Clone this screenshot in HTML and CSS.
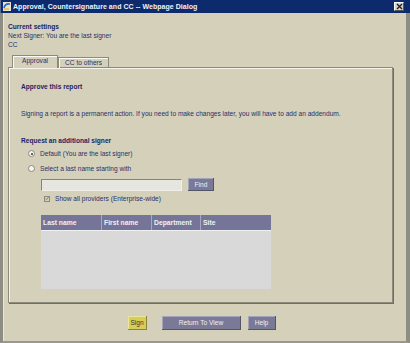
FILE: index.html
```html
<!DOCTYPE html>
<html lang="en">
<head>
  <meta charset="UTF-8">
  <title>Approval, Countersignature and CC -- Webpage Dialog</title>
  <link rel="stylesheet" href="styles.css">
</head>
<body>
  <div class="dialog">
    <div class="titlebar">
      <svg class="titlebar__icon" width="8" height="9" viewBox="0 0 8 9">
        <rect x="0" y="0" width="8" height="9" fill="#e8e4d0"/>
        <path d="M1 6 Q2 1 7 2" stroke="#2a6ad0" stroke-width="1.6" fill="none"/>
        <path d="M1 7 L6 7" stroke="#e0a020" stroke-width="1"/>
      </svg>
      <span class="titlebar__text">Approval, Countersignature and CC -- Webpage Dialog</span>
      <span class="titlebar__close">
        <svg width="7" height="7" viewBox="0 0 7 7"><path d="M1 1 L6 6 M6 1 L1 6" stroke="#222" stroke-width="1.4"/></svg>
      </span>
    </div>
    <div class="main">
      <div class="settings">
        <div class="heading">Current settings</div>
        <div>Next Signer: You are the last signer</div>
        <div>CC</div>
      </div>
      <div class="tabs">
        <div class="tab tab--active">Approval</div>
        <div class="tab">CC to others</div>
      </div>
      <div class="panel">
        <div class="heading section-title">Approve this report</div>
        <p class="note">Signing a report is a permanent action. If you need to make changes later, you will have to add an addendum.</p>
        <div class="heading section-title">Request an additional signer</div>
        <div class="option"><span class="radio radio--on"></span>Default (You are the last signer)</div>
        <div class="option"><span class="radio"></span>Select a last name starting with</div>
        <div class="search">
          <div class="search__input"></div>
          <div class="btn btn--small">Find</div>
        </div>
        <div class="check"><span class="checkbox">
          <svg width="5" height="5" viewBox="0 0 5 5"><path d="M0.5 2.5 L2 4 L4.5 0.5" stroke="#777" stroke-width="1" fill="none"/></svg>
        </span>Show all providers (Enterprise-wide)</div>
        <div class="grid">
          <div class="grid__head">
            <div class="col col--last">Last name</div>
            <div class="col col--first">First name</div>
            <div class="col col--dept">Department</div>
            <div class="col col--site">Site</div>
          </div>
          <div class="grid__body"></div>
        </div>
      </div>
      <div class="actions">
        <div class="btn btn--sign">Sign</div>
        <div class="btn btn--wide">Return To View</div>
        <div class="btn btn--help">Help</div>
      </div>
    </div>
  </div>
</body>
</html>
```
FILE: styles.css
```css
body {
  margin: 0;
  font-family: "Liberation Sans", Arial, sans-serif;
  font-size: 6.6px;
  color: #27306a;
  background: #d5d0b9;
}
.dialog {
  width: 410px;
  height: 343px;
  display: flex;
  flex-direction: column;
}
.titlebar {
  height: 13px;
  background: #0d2a6c;
  display: flex;
  align-items: center;
  padding: 0 6px 0 2px;
  border-left: 1px solid #5a6a90;
}
.titlebar__icon {
  margin-right: 2px;
}
.titlebar__text {
  flex: 1;
  color: #f2f2f6;
  font-weight: bold;
  font-size: 7px;
  letter-spacing: 0.05px;
}
.titlebar__close {
  width: 10px;
  height: 9px;
  background: #d8d4c6;
  border: 1px solid #fff;
  border-right-color: #555;
  border-bottom-color: #555;
  box-sizing: border-box;
  display: flex;
  align-items: center;
  justify-content: center;
}
.main {
  flex: 1;
  border-left: 3px solid #8e8d84;
  border-right: 4px solid #8e8d84;
  border-bottom: 2px solid #9a988c;
  padding-left: 5px;
  box-shadow: inset 1px 0 #e8e6dc;
}
.heading {
  font-weight: bold;
  color: #1c2466;
}
.settings {
  padding-top: 9px;
  line-height: 9px;
}
.tabs {
  display: flex;
  margin: 6px 0 0 4px;
  height: 12px;
  align-items: flex-end;
}
.tab {
  height: 10px;
  line-height: 10px;
  padding: 0 6px;
  border: 1px solid #8c8a7c;
  border-bottom: none;
  box-shadow: inset 1px 1px #fbfaf4;
  color: #2a3068;
  margin-bottom: -1px;
}
.tab--active {
  height: 12px;
  padding: 0 9px;
  position: relative;
  z-index: 1;
  background: #d5d0b9;
}
.panel {
  width: 385px;
  height: 236px;
  box-sizing: border-box;
  border: 1px solid #8c8a7c;
  box-shadow: inset 1px 1px #f6f4ea, 1px 1px #6f6e66;
  padding: 14px 0 0 12px;
}
.section-title {
  line-height: 9px;
}
.note {
  margin: 18px 0 18px;
  line-height: 9px;
}
.option {
  display: flex;
  align-items: center;
  margin-left: 7px;
  height: 9px;
}
.option + .option {
  margin-top: 6px;
}
.section-title + .option {
  margin-top: 4px;
}
.radio {
  width: 5px;
  height: 5px;
  border-radius: 50%;
  background: #f4f4f0;
  border: 1px solid #8c8a80;
  margin-right: 5px;
  display: flex;
  align-items: center;
  justify-content: center;
}
.radio--on::after {
  content: "";
  width: 2px;
  height: 2px;
  border-radius: 50%;
  background: #333;
}
.search {
  display: flex;
  align-items: center;
  margin: 5px 0 0 20px;
}
.search__input {
  width: 139px;
  height: 10px;
  background: #e6e5e0;
  border: 1px solid #858478;
  border-right-color: #f0efe8;
  border-bottom-color: #f0efe8;
}
.btn {
  height: 13px;
  line-height: 13px;
  padding: 0 7px;
  background: #7a7a96;
  color: #eeeef6;
  box-shadow: inset -1px -1px #55556a, inset 1px 1px #a4a4bc;
  text-align: center;
}
.btn--small {
  margin-left: 6px;
  width: 26px;
  padding: 0;
}
.check {
  display: flex;
  align-items: center;
  margin: 3px 0 0 23px;
  height: 9px;
}
.checkbox {
  width: 6px;
  height: 6px;
  box-sizing: border-box;
  border: 1px solid #8c8a80;
  background: #d5d0b9;
  margin-right: 5px;
  display: flex;
  align-items: center;
  justify-content: center;
}
.grid {
  margin: 12px 0 0 20px;
  width: 230px;
}
.grid__head {
  display: flex;
  height: 15px;
  background: #75759a;
  border-bottom: 1px solid #f0f0f0;
}
.col {
  color: #f0f0f6;
  font-weight: bold;
  font-size: 6.8px;
  line-height: 15px;
  padding-left: 2px;
  box-sizing: border-box;
  border-right: 1px solid #a8a8c0;
}
.col--last { width: 61px; }
.col--first { width: 50px; }
.col--dept { width: 49px; }
.col--site { flex: 1; border-right: none; }
.grid__body {
  height: 58px;
  background: #d9d9d9;
}
.actions {
  width: 385px;
  display: flex;
  justify-content: center;
  gap: 7px;
  margin-top: 13px;
  padding-left: 1px;
}
.actions .btn {
  height: 14px;
  line-height: 14px;
}
.btn--sign {
  width: 19px;
  padding: 0;
  margin-right: 8px;
  background: #d8cd5a;
  color: #3a3a20;
  box-shadow: inset -1px -1px #8a8440, inset 1px 1px #ece69a;
}
.btn--wide {
  width: 79px;
  padding: 0;
}
.btn--help {
  width: 28px;
  padding: 0;
}
```
